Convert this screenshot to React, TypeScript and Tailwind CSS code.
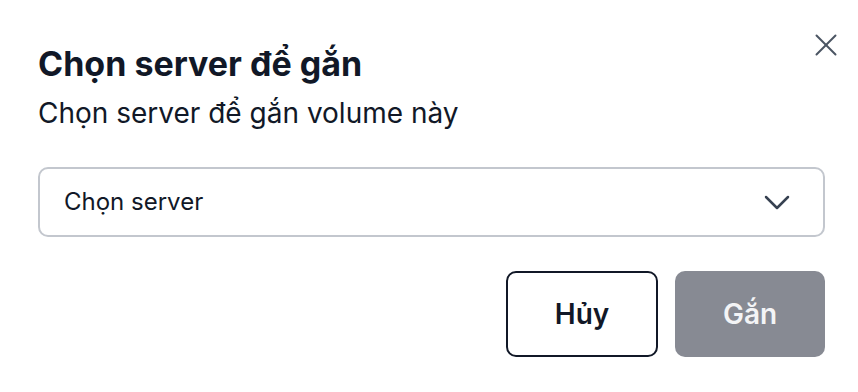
import { X } from 'lucide-react'

export default function App() {
  return (
    <div
      className="relative w-[858px] h-[392px] bg-white overflow-hidden"
      style={{ fontFamily: 'Inter, "Noto Sans", sans-serif' }}
    >
      {/* Close */}
      <button className="absolute left-[807px] top-[26px] text-[#4b5563]">
        <X size={38} strokeWidth={1.25} />
      </button>

      <div className="flex flex-col pl-[38px] pr-[33px] pt-[44px]">
        {/* Header */}
        <h2 className="text-[34px] leading-[40px] font-bold text-[#111827]">Chọn server để gắn</h2>
        <p className="mt-[11px] text-[28px] leading-[36px] text-[#111827]">Chọn server để gắn volume này</p>

        {/* Select */}
        <button className="mt-[36px] h-[70px] w-full flex items-center justify-between pl-[24px] pr-[33px] rounded-[10px] border-2 border-[#c3c7ce] text-left">
          <span className="text-[24px] text-[#111827]">Chọn server</span>
          <svg width="26" height="15" viewBox="0 0 26 15" fill="none" className="text-[#374151]">
            <polyline points="2,2 13,13 24,2" stroke="currentColor" strokeWidth="2.5" strokeLinecap="round" strokeLinejoin="round" />
          </svg>
        </button>

        {/* Actions */}
        <div className="mt-[34px] flex justify-end gap-[17px]">
          <button className="w-[152px] h-[86px] rounded-[10px] border-2 border-[#111827] text-[28px] font-semibold text-[#111827]">
            Hủy
          </button>
          <button className="w-[150px] h-[86px] rounded-[10px] bg-[#878a93] text-[28px] font-semibold text-[#f3f4f6]">
            Gắn
          </button>
        </div>
      </div>
    </div>
  )
}
